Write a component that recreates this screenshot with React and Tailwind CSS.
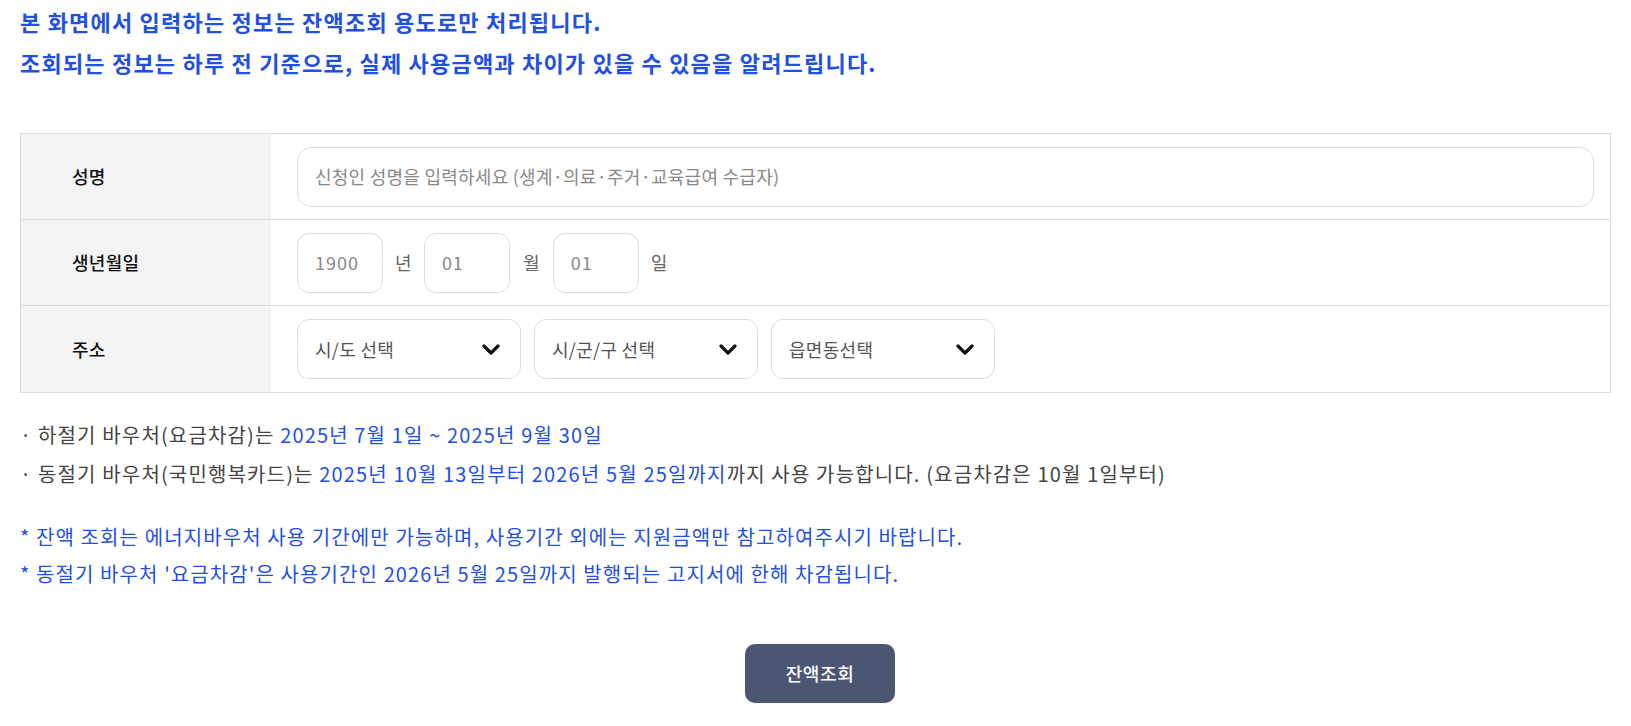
import React from "react";

const font = { fontFamily: '"Noto Sans CJK KR", "Noto Sans", sans-serif' };

const Chevron = () => (
    <svg width="18" height="11" viewBox="0 0 18 11" fill="none">
        <path d="M2 2l7 7 7-7" stroke="#111" strokeWidth="3.2" strokeLinecap="round" strokeLinejoin="round" />
    </svg>
);

const SelectBox = ({ label }) => (
    <div className="flex items-center justify-between w-[224px] h-[60px] border border-[#dcdcdc] rounded-[12px] pl-[17px] pr-[20px] bg-white">
        <span className="text-[18px] tracking-[0.3px] text-[#555]">{label}</span>
        <Chevron />
    </div>
);

const DateBox = ({ value }) => (
    <div className="flex items-center w-[86px] h-[60px] border border-[#dcdcdc] rounded-[12px] pl-[17px] text-[18px] tracking-[1px] text-[#888]">
        {value}
    </div>
);

const Row = ({ label, children, last }) => (
    <div className={"flex h-[86px] " + (last ? "" : "border-b border-[#dcdcdc]")}>
        <div className="w-[250px] bg-[#f4f4f4] flex items-center pl-[51px] text-[18px] tracking-[0.3px] font-medium text-[#111]">{label}</div>
        <div className="flex-1 flex items-center pl-[26px] pr-[16px] bg-white">{children}</div>
    </div>
);

export default function App() {
    return (
        <div className="bg-white min-h-[726px] px-[20px] pt-[1px]" style={font}>
            <div className="text-[22px] font-bold text-[#1f50e0] leading-[41px] tracking-[1.2px]">
                <p>본 화면에서 입력하는 정보는 잔액조회 용도로만 처리됩니다.</p>
                <p>조회되는 정보는 하루 전 기준으로, 실제 사용금액과 차이가 있을 수 있음을 알려드립니다.</p>
            </div>

            <div className="mt-[50px] border border-[#dcdcdc]">
                <Row label="성명">
                    <div className="flex items-center w-full h-[60px] border border-[#dcdcdc] rounded-[14px] pl-[17px] text-[18px] tracking-[0.25px] text-[#888]">
                        신청인 성명을 입력하세요 (생계·의료·주거·교육급여 수급자)
                    </div>
                </Row>
                <Row label="생년월일">
                    <div className="flex items-center gap-[12px] text-[18px] tracking-[0.3px] text-[#666]">
                        <DateBox value="1900" />
                        <span>년</span>
                        <DateBox value="01" />
                        <span className="px-[1px]">월</span>
                        <DateBox value="01" />
                        <span>일</span>
                    </div>
                </Row>
                <Row label="주소" last>
                    <div className="flex items-center gap-[13px]">
                        <SelectBox label="시/도 선택" />
                        <SelectBox label="시/군/구 선택" />
                        <SelectBox label="읍면동선택" />
                    </div>
                </Row>
            </div>

            <div className="mt-[22px] text-[20px] text-[#444] leading-[39px] tracking-[1.15px]">
                <p>· 하절기 바우처(요금차감)는 <span className="text-[#1f50e0]">2025년 7월 1일 ~ 2025년 9월 30일</span></p>
                <p>· 동절기 바우처(국민행복카드)는 <span className="text-[#1f50e0]">2025년 10월 13일부터 2026년 5월 25일까지</span>까지 사용 가능합니다. (요금차감은 10월 1일부터)</p>
            </div>

            <div className="mt-[25px] text-[20px] text-[#1f50e0] leading-[37px] tracking-[1.1px]">
                <p>* 잔액 조회는 에너지바우처 사용 기간에만 가능하며, 사용기간 외에는 지원금액만 참고하여주시기 바랍니다.</p>
                <p>* 동절기 바우처 '요금차감'은 사용기간인 2026년 5월 25일까지 발행되는 고지서에 한해 차감됩니다.</p>
            </div>

            <div className="flex justify-center mt-[52px] ml-[9px]">
                <button className="w-[150px] h-[59px] rounded-[10px] bg-[#4b5672] text-white text-[18px] tracking-[0.6px] font-medium">잔액조회</button>
            </div>
        </div>
    );
}
